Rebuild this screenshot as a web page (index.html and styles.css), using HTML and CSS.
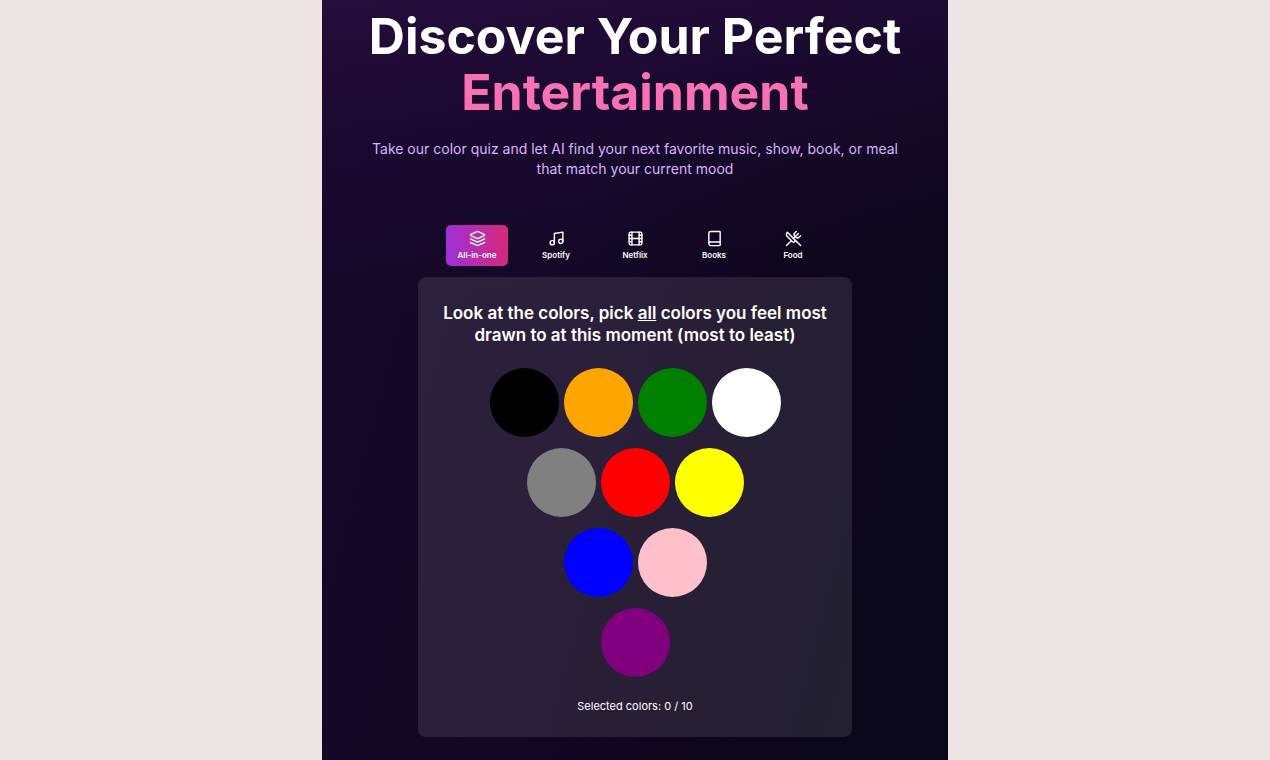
FILE: index.html
```
<!DOCTYPE html>
<html lang="en">
<head>
  <meta charset="UTF-8">
  <meta name="viewport" content="width=device-width, initial-scale=1.0">
  <title>Discover Your Perfect Entertainment</title>
  <link rel="stylesheet" href="styles.css">
</head>
<body>
  <main class="page">
    <h1 class="title">Discover Your Perfect <span class="highlight">Entertainment</span></h1>
    <p class="subtitle">Take our color quiz and let AI find your next favorite music, show, book, or meal that match your current mood</p>

    <nav class="tabs">
      <button class="tab active" type="button">
        <svg viewBox="0 0 24 24"><path d="m12.83 2.18a2 2 0 0 0-1.66 0L2.6 6.08a1 1 0 0 0 0 1.83l8.58 3.91a2 2 0 0 0 1.66 0l8.58-3.9a1 1 0 0 0 0-1.83Z"/><path d="m22 17.65-9.17 4.16a2 2 0 0 1-1.66 0L2 17.65"/><path d="m22 12.65-9.17 4.16a2 2 0 0 1-1.66 0L2 12.65"/></svg>
        All-in-one
      </button>
      <button class="tab" type="button">
        <svg viewBox="0 0 24 24"><path d="M9 18V5l12-2v13"/><circle cx="6" cy="18" r="3"/><circle cx="18" cy="16" r="3"/></svg>
        Spotify
      </button>
      <button class="tab" type="button">
        <svg viewBox="0 0 24 24"><rect width="18" height="18" x="3" y="3" rx="2"/><path d="M7 3v18M17 3v18M3 12h18M3 7.5h4M3 16.5h4M17 7.5h4M17 16.5h4"/></svg>
        Netflix
      </button>
      <button class="tab" type="button">
        <svg viewBox="0 0 24 24"><path d="M4 19.5v-15A2.5 2.5 0 0 1 6.5 2H19a1 1 0 0 1 1 1v18a1 1 0 0 1-1 1H6.5a1 1 0 0 1 0-5H20"/></svg>
        Books
      </button>
      <button class="tab" type="button">
        <svg viewBox="0 0 24 24"><path d="m16 2-2.3 2.3a3 3 0 0 0 0 4.2l1.8 1.8a3 3 0 0 0 4.2 0L22 8"/><path d="M15 15 3.3 3.3a4.2 4.2 0 0 0 0 6l7.3 7.3c.7.7 2 .7 2.8 0L15 15Zm0 0 7 7"/><path d="m2.1 21.8 6.4-6.3"/><path d="m19 5-7 7"/></svg>
        Food
      </button>
    </nav>

    <section class="card">
      <h2>Look at the colors, pick <u>all</u> colors you feel most drawn to at this moment (most to least)</h2>
      <div class="colors">
        <div class="color-row">
          <button class="color black" type="button" aria-label="Black"></button>
          <button class="color orange" type="button" aria-label="Orange"></button>
          <button class="color green" type="button" aria-label="Green"></button>
          <button class="color white" type="button" aria-label="White"></button>
        </div>
        <div class="color-row">
          <button class="color gray" type="button" aria-label="Gray"></button>
          <button class="color red" type="button" aria-label="Red"></button>
          <button class="color yellow" type="button" aria-label="Yellow"></button>
        </div>
        <div class="color-row">
          <button class="color blue" type="button" aria-label="Blue"></button>
          <button class="color pink" type="button" aria-label="Pink"></button>
        </div>
        <div class="color-row">
          <button class="color purple" type="button" aria-label="Purple"></button>
        </div>
      </div>
      <p class="selected">Selected colors: <span id="count">0</span> / 10</p>
    </section>
  </main>
  <script>
  const tabs = document.querySelectorAll('.tab');
  const colors = document.querySelectorAll('.color');

  tabs.forEach(tab => {
    tab.addEventListener('click', () => {
      tabs.forEach(t => t.classList.remove('active'));
      tab.classList.add('active');
    });
  });

  colors.forEach(color => {
    color.addEventListener('click', () => {
      color.classList.toggle('picked');
      document.getElementById('count').textContent = document.querySelectorAll('.picked').length;
    });
  });
  </script>
</body>
</html>
```
FILE: styles.css
```
* {
  box-sizing: border-box;
}
body {
  font-family: Inter, "Liberation Sans", sans-serif;
  margin: 0;
  background-color: #ede4e4;
  color: white;
}
h1, h2, p {
  margin: 0;
}
button {
  font-family: inherit;
  color: inherit;
  border: none;
  cursor: pointer;
}
.page {
  max-width: 626px;
  min-height: 100vh;
  margin: 0 auto;
  padding: 8px 24px 23px;
  display: flex;
  flex-direction: column;
  align-items: center;
  text-align: center;
  background:
    linear-gradient(172deg, #250d3c 0%, rgba(30, 11, 52, 0.7) 16%, rgba(20, 8, 38, 0) 38%),
    linear-gradient(105deg, #150828 0%, #130726 40%, #0f061e 65%, #0b071b 85%);
}
.title {
  max-width: 560px;
  font-size: 50px;
  line-height: 56px;
  font-weight: 700;
}
.highlight {
  display: block;
  color: #f871b5;
}
.subtitle {
  max-width: 530px;
  margin-top: 19px;
  font-size: 14px;
  line-height: 20px;
  color: #d8b4fe;
}
.tabs {
  display: flex;
  gap: 17px;
  margin-top: 46px;
}
.tab {
  display: flex;
  flex-direction: column;
  align-items: center;
  gap: 2px;
  width: 62px;
  height: 41px;
  padding: 5px 0;
  border-radius: 5px;
  background: none;
  font-size: 8px;
  line-height: 12px;
  font-weight: 600;
}
.tab.active {
  background: linear-gradient(to right, #9d30d8, #d72879);
}
.tab svg {
  width: 17px;
  height: 17px;
  fill: none;
  stroke: currentColor;
  stroke-width: 2;
  stroke-linecap: round;
  stroke-linejoin: round;
}
.card {
  width: 100%;
  max-width: 434px;
  margin-top: 11px;
  padding: 25px 24px 23px;
  border-radius: 8px;
  background-color: rgba(255, 255, 255, 0.1);
}
.card h2 {
  font-size: 17px;
  line-height: 22px;
  font-weight: 600;
}
.colors {
  display: flex;
  flex-direction: column;
  gap: 11px;
  margin-top: 22px;
}
.color-row {
  display: flex;
  justify-content: center;
  gap: 5px;
}
.color {
  width: 69px;
  height: 69px;
  padding: 0;
  border-radius: 50%;
}
.color.picked {
  opacity: 0.3;
}
.selected {
  margin-top: 21px;
  font-size: 11px;
  line-height: 16px;
}

.black { background-color: black; }
.orange { background-color: orange; }
.green { background-color: green; }
.white { background-color: white; }
.gray { background-color: gray; }
.red { background-color: red; }
.yellow { background-color: yellow; }
.blue { background-color: blue; }
.pink { background-color: pink; }
.purple { background-color: purple; }
```
